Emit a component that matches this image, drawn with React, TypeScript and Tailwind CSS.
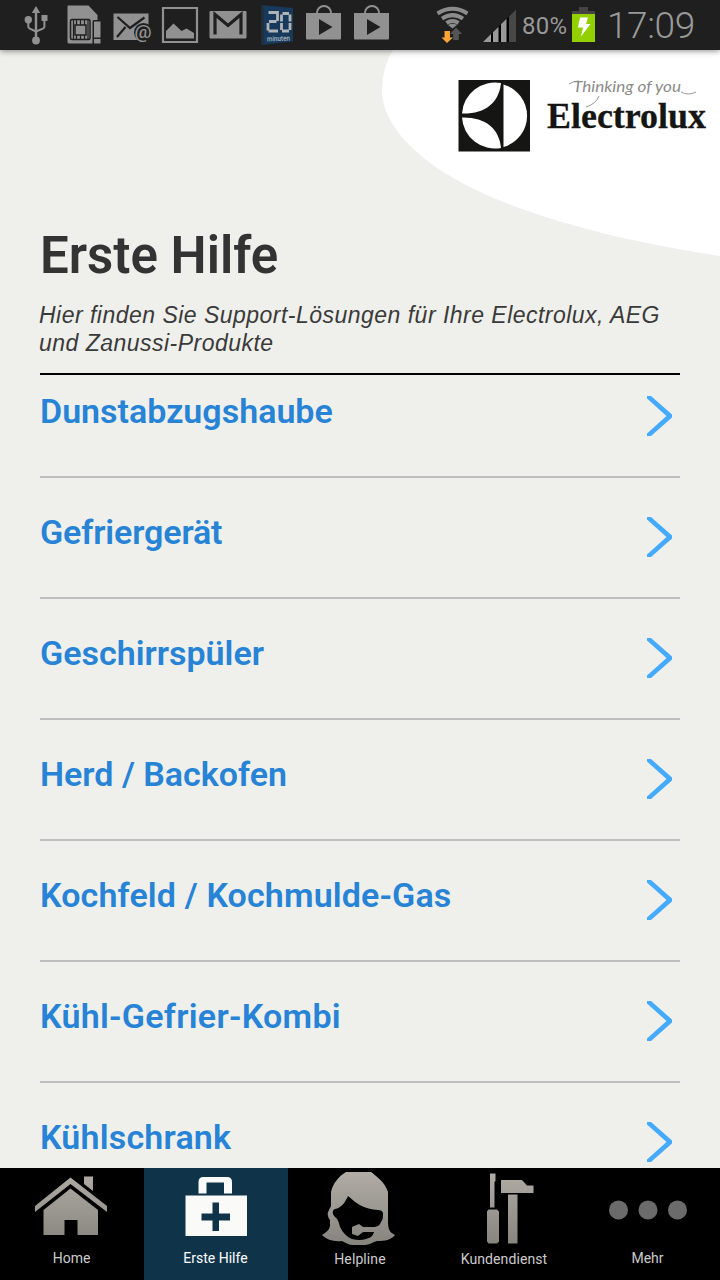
import type { ReactNode } from 'react';

const topics = [
  { label: 'Dunstabzugshaube', tracking: 'tracking-[0px]' },
  { label: 'Gefriergerät', tracking: 'tracking-[-0.12px]' },
  { label: 'Geschirrspüler', tracking: 'tracking-[0px]' },
  { label: 'Herd / Backofen', tracking: 'tracking-[0px]' },
  { label: 'Kochfeld / Kochmulde-Gas', tracking: 'tracking-[0.14px]' },
  { label: 'Kühl-Gefrier-Kombi', tracking: 'tracking-[0.28px]' },
  { label: 'Kühlschrank', tracking: 'tracking-[0.2px]' },
];

function StatusIcon({ children }: { children: ReactNode }) {
  return (
    <svg viewBox="0 0 48 50" className="w-12 h-[50px] shrink-0" fill="#919191">
      {children}
    </svg>
  );
}

function StoreIcon() {
  return (
    <StatusIcon>
      <path d="M17 14v-1c0-4 3-7 7-7s7 3 7 7v1" fill="none" stroke="#919191" strokeWidth="1.8" />
      <path fillRule="evenodd" d="M6 13h35v25.5q0 1-1 1H7q-1 0-1-1V13zM19 19v16l13.5-8z" />
    </StatusIcon>
  );
}

function StatusBar() {
  return (
    <header className="relative z-10 flex h-[50px] shrink-0 items-center bg-[#1f1f1f] pl-3 text-[#999] shadow-[0_1px_6px_rgba(0,0,0,0.45)]">
      <StatusIcon>
        <path d="M24 6l4.2 7h-3v25h-2.4V13h-3z" />
        <circle cx="24" cy="40.5" r="3.9" />
        <circle cx="16.3" cy="19.7" r="3.7" />
        <path d="M29.5 15h6v6h-6z" />
        <path d="M16.3 20v6.5q0 1.5 1.5 2.2L24 31.5M32.4 20v6.5q0 1.5-1.5 2.2L24 31.5" fill="none" stroke="#919191" strokeWidth="2" />
      </StatusIcon>
      <StatusIcon>
        <path d="M8 5.5h20.5L37.5 15v5H34q-1.5 0-1.5 2v21.5H9q-1.5 0-1.5-1.5V7q0-1.5.5-1.5z" />
        <path d="M34 21.5h6.5v16H34zM34 39h6.5v4.5H34z" />
        <g fill="none" stroke="#1f1f1f" strokeWidth="1.5">
          <rect x="10.5" y="19.5" width="19.5" height="20" rx="1.5" />
          <rect x="15" y="25" width="11" height="10" />
          <path d="M16.5 20v5M20.5 20v5M24.5 20v5M16.5 35v5M20.5 35v5M24.5 35v5M13.5 20v20M28 20v20" strokeWidth="1.2" />
        </g>
      </StatusIcon>
      <StatusIcon>
        <path d="M5.5 13.5h35V40h-35z" />
        <path d="M9.5 17L22 28 36.5 17.5M9 37l8.5-10" fill="none" stroke="#1f1f1f" strokeWidth="2.2" />
        <circle cx="35.5" cy="32.5" r="9.5" fill="#1f1f1f" />
        <text x="35" y="38" textAnchor="middle" fontFamily="Roboto" fontWeight="500" fontSize="19">@</text>
      </StatusIcon>
      <StatusIcon>
        <path d="M7 8h34v34H7z" fill="none" stroke="#919191" strokeWidth="2.2" />
        <path d="M10 38.5V31l7.5-7.5 8 7.5 5-2.5 7.5 4.5v5.5z" />
      </StatusIcon>
      <StatusIcon>
        <rect x="5.5" y="11" width="37" height="27.5" rx="1" />
        <path d="M11 34.5v-20l13 11 13-11v20" fill="none" stroke="#1f1f1f" strokeWidth="3.2" />
      </StatusIcon>
      <StatusIcon>
        <path d="M9.5 5L41 8v33.5L9.5 45z" fill="#173a5c" />
        <path d="M9.5 5l2.5.2v39.5l-2.5.3z" fill="#22303c" />
        <g fill="none" stroke="#b0b4b6" strokeWidth="2.8">
          <path d="M16.5 12.5h9V21M24.5 21.5H17M16 23v7.5M16.5 31H26" />
          <path d="M30.5 13.5H37M29.5 14.5v7M29.5 23v7M38 14.5v7M38 23v7M30 31h7" />
        </g>
        <text x="15" y="41" fontFamily="Roboto" fontWeight="500" fontSize="7.5" textLength="23" lengthAdjust="spacingAndGlyphs" fill="#aeb9c1" transform="rotate(-2 26 40)">minuten</text>
      </StatusIcon>
      <StoreIcon />
      <StoreIcon />

      <svg viewBox="429 0 90 50" className="ml-[33px] h-[50px] w-[90px] shrink-0">
        <g fill="none" stroke="#8b8b8b" strokeWidth="4">
          <path d="M437.5 13.5q15-9.500 30 0" />
          <path d="M442 18.600q10.500-7 21 0" />
          <path d="M446.5 23q6-4 12 0" />
        </g>
        <path d="M452.5 28.5L448 25q4.500-2.500 9 0z" fill="#8b8b8b" />
        <path d="M456 27.5l6 6.5h-3.200v6h-5.600v-6H450z" fill="#555" />
        <path d="M444.5 31h5.500v6.500h3L447 43l-5.500-5.500h3z" fill="#ffa334" />
        <path d="M483 42l33-32.500V42z" fill="#000" />
        <path d="M483 42l8-8v8zM493 42v-9.800l5.500-5.500V42zM501 42V24.200l5.500-5.500V42z" fill="#999" />
        <path d="M509 42V16.500l7-7V42z" fill="#484848" />
      </svg>
      <span className="ml-[3px] w-[50px] pt-0.5 font-[Roboto] text-[24px] leading-none tracking-[0.2px]">80%</span>
      <svg viewBox="0 0 23 50" className="h-[50px] w-[23px] shrink-0">
        <path d="M0 14v-3h7V7h9v4h7v3z" fill="#444" />
        <path d="M0 14h23v28H0z" fill="#94d000" />
        <path d="M8 17.500h8l-2 6.500h4.500L9 36.500l2-9H6z" fill="#fff" />
      </svg>
      <span className="ml-3 font-[Roboto] text-[37px] font-light leading-none tracking-[-0.4px]">17:09</span>
    </header>
  );
}

function Brand() {
  return (
    <svg viewBox="380 50 340 210" className="h-[210px] w-[340px]">
      <path d="M393 50Q382 68 382 90C382 112 396 134 418 153C450 182 530 227 720 256V50z" fill="#fff" />
      <path d="M458.500 80h71.500v71.500h-71.500z" fill="#151514" />
      <path d="M503.500 84.500a32.500 32.500 0 0 1 0 62.500z" fill="#fff" />
      <path d="M462 113.500A33 33 0 0 1 501 83C499 103 485 114 462 113.500z" fill="#fff" />
      <path d="M462 117.500A33 33 0 0 0 501 148C499 128 485 117 462 117.500z" fill="#fff" />
      <g fill="none" stroke="#999" strokeWidth="1">
        <path d="M569 84q4-3 10-3M599 96q-3 8-13 11M681 92q7 4 15 0" />
      </g>
      <text x="573" y="92" fontFamily="Lato" fontStyle="italic" fontWeight="400" fontSize="15" textLength="108" lengthAdjust="spacingAndGlyphs" fill="#8a8a8a">Thinking of you</text>
      <text x="547" y="128" fontFamily="Liberation Serif" fontWeight="700" fontSize="36.5" textLength="159" lengthAdjust="spacingAndGlyphs" fill="#151514" stroke="#151514" strokeWidth="0.3">Electrolux</text>
    </svg>
  );
}

function Chevron() {
  return (
    <svg viewBox="0 0 26 40" className="mr-2 h-10 w-[26px]" fill="#44aaff">
      <path d="M1 0h4L26 18.500v3L5 40H1v-2.500L20.500 20 1 2.500z" />
    </svg>
  );
}

function NavItem({ label, active = false, low = false, children }: { label: string; active?: boolean; low?: boolean; children: ReactNode }) {
  return (
    <button className={`flex flex-1 flex-col items-center ${active ? 'bg-[#0f3349] text-white' : 'text-[#ccc]'}`}>
      <svg viewBox="0 0 144 80" className="h-20 w-36" fill="url(#metal)">
        {children}
      </svg>
      <span className={`font-[Roboto] text-[14px] leading-5 ${low ? 'pt-px tracking-[0.1px]' : '-ml-px'}`}>{label}</span>
    </button>
  );
}

function TabBar() {
  return (
    <nav className="flex h-28 shrink-0 bg-black">
      <svg className="absolute h-0 w-0">
        <linearGradient id="metal" x1="0" y1="0" x2="0" y2="80" gradientUnits="userSpaceOnUse">
          <stop offset="0" stopColor="#b3afa7" />
          <stop offset="1" stopColor="#85827d" />
        </linearGradient>
      </svg>
      <NavItem label="Home">
        <path d="M35 38L70.500 9.500 107 38v6L70.500 16 35 44zM84 8.500h9V23l-9-7z" />
        <path d="M43.500 42L70.500 20.500 98 42v25H77.500V52h-13v15h-21z" />
      </NavItem>
      <NavItem label="Erste Hilfe" active>
        <path d="M54.500 25.500V14q0-5 5-5H83q5 0 5 5v11.500h-8v-11H62.500v11z" fill="#fafaf8" />
        <path fillRule="evenodd" d="M41.500 27.500H103V68H41.500zM68.500 34.500V45.500h-11v7h11V63H75V52.500h11v-7H75v-11z" fill="#fafaf8" />
      </NavItem>
      <NavItem label="Helpline" low>
        <path
          fillRule="evenodd"
          d="M58 4h25c5 4 14 10 17 20v28c0 9 1 12 7 15-4 5-10 6-18 6-4 1-8 4-12 4H65c-4 0-7-2-11-4-8 1-15-1-20-6 5-3 8-6 8-10V52q-4-5-1-10l2-4V24C45 15 51 8 58 4zM60 28c-3 7-7 12-13 13-3 1-3 5 0 8 3 2 4 6 5 10 3 6 7 10 12 12q8 2 14 0c4-1 7-3 8-7H75l-5 4-6-2v-7l7-3 4 3h9c6 0 8-2 9-5 2-2 2-6 2-9q-1-3-5-3C76 41 69 36 60 28z"
        />
      </NavItem>
      <NavItem label="Kundendienst" low>
        <path d="M58 5.500h5.500v7.500l-1 1V39.500H58zM56.500 41.500H65l2 2V73.500L65 75.500H56.500l-1.500-2V43.500z" />
        <path d="M69 12h21l5 5.500h6.500V25H69zM76 26.500h9.500v49H76z" />
      </NavItem>
      <NavItem label="Mehr">
        <g fill="#6b6b6b">
          <circle cx="42.500" cy="42" r="9.500" />
          <circle cx="72" cy="42" r="9.500" />
          <circle cx="101.500" cy="42" r="9.500" />
        </g>
      </NavItem>
    </nav>
  );
}

export default function App() {
  return (
    <div className="flex h-[1280px] w-[720px] flex-col overflow-hidden bg-[#efefeb]">
      <StatusBar />

      <main className="relative min-h-0 flex-1 overflow-hidden px-10">
        <div className="absolute right-0 top-0">
          <Brand />
        </div>

        <div className="relative h-[325px] border-b-2 border-black pt-[176px]">
          <h1 className="font-[Roboto] text-[51px] font-semibold leading-[60px] text-[#333]">Erste Hilfe</h1>
          <p className="-ml-px mt-[15px] whitespace-nowrap font-['Liberation_Sans'] text-[23px] italic leading-7 tracking-[0.48px] text-[#3a3a3a]">
            Hier finden Sie Support-Lösungen für Ihre Electrolux, AEG
            <br />
            und Zanussi-Produkte
          </p>
        </div>

        <ul>
          {topics.map((topic) => (
            <li
              key={topic.label}
              className="flex h-[121px] items-start justify-between border-b-2 border-[#bfbfbf] pt-[39px] first:h-[103px] first:pt-[21px]"
            >
              <span className={`-mt-[5px] font-[Roboto] text-[34px] font-semibold leading-10 text-[#2683d6] ${topic.tracking}`}>
                {topic.label}
              </span>
              <Chevron />
            </li>
          ))}
        </ul>
      </main>

      <TabBar />
    </div>
  );
}
